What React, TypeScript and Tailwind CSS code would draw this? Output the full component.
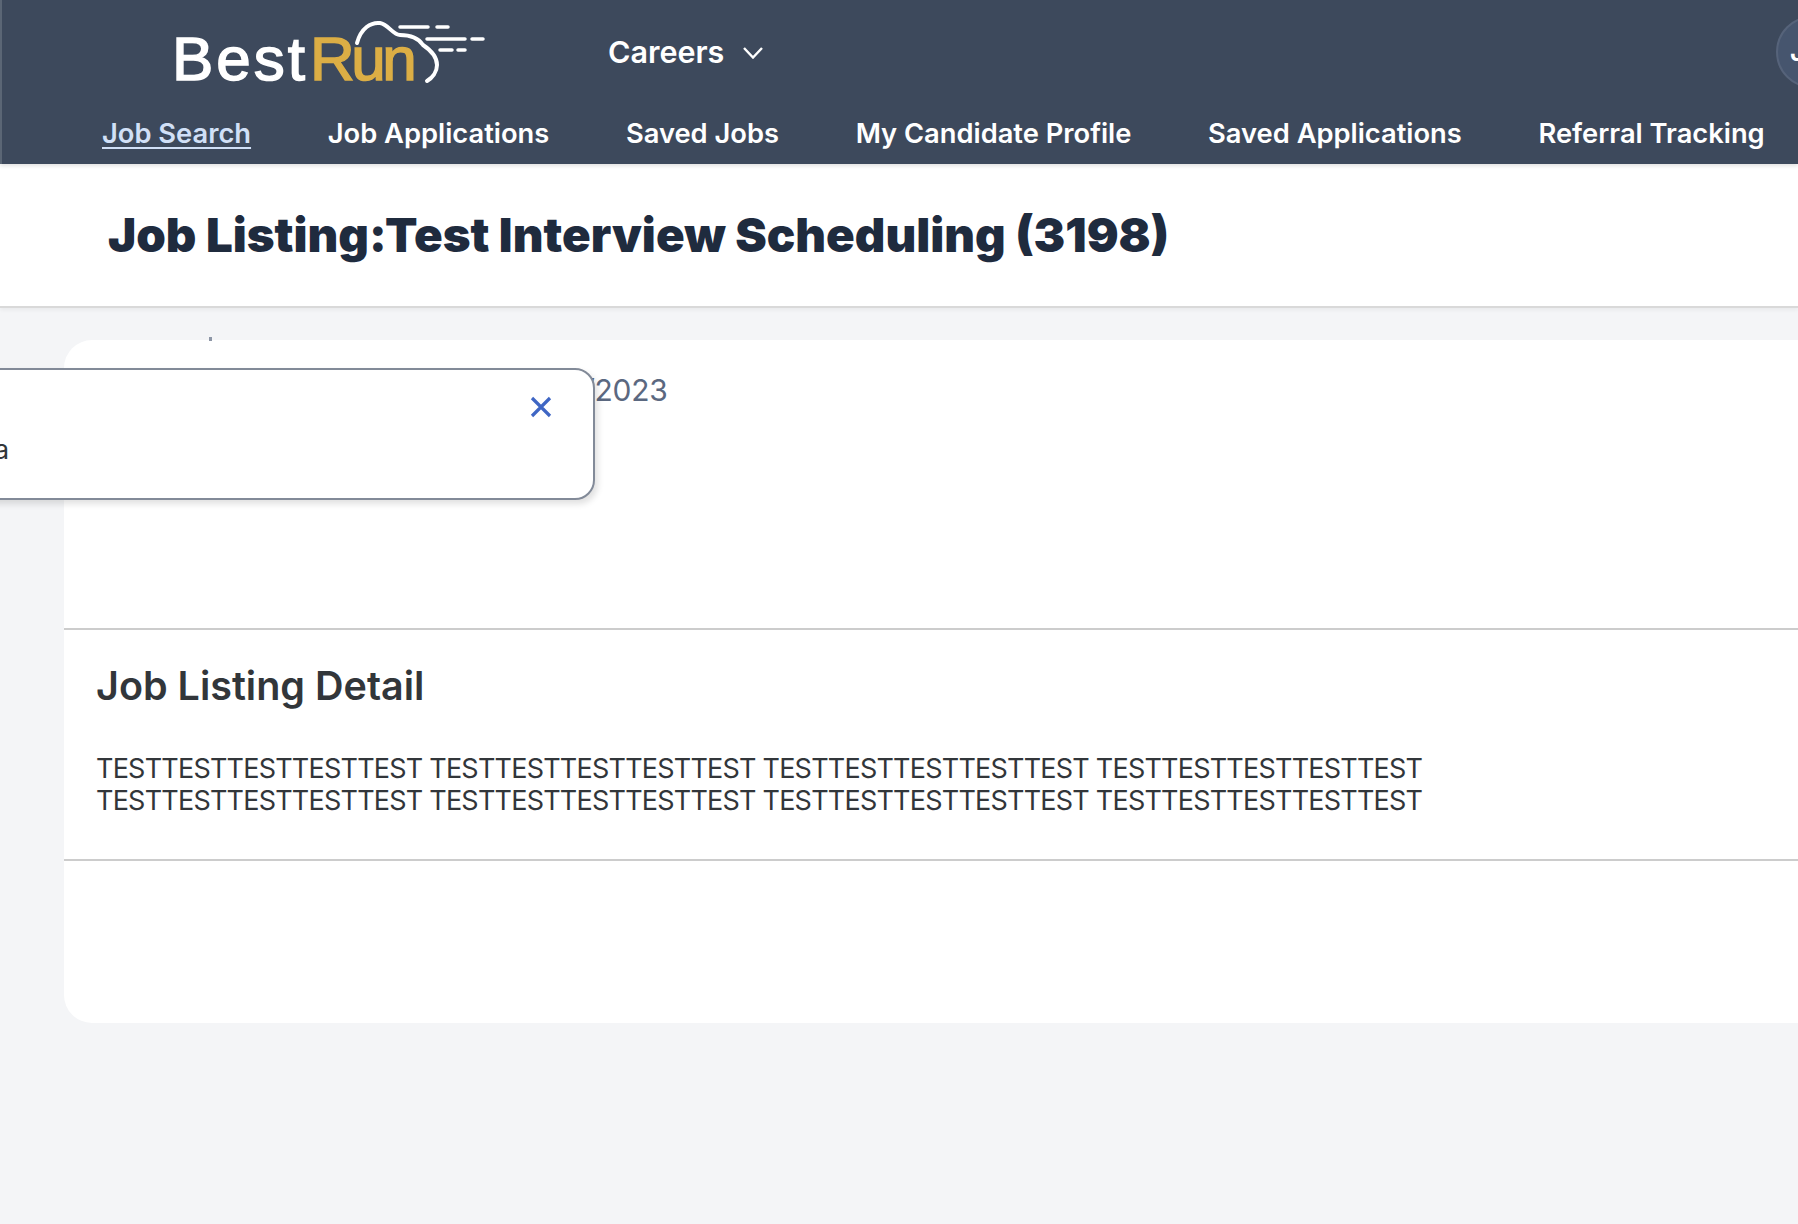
const NAV = ["Job Applications", "Saved Jobs", "My Candidate Profile", "Saved Applications", "Referral Tracking"];
const TEST = "TESTTESTTESTTESTTEST TESTTESTTESTTESTTEST TESTTESTTESTTESTTEST TESTTESTTESTTESTTEST";

function Logo() {
  return (
    <div className="relative h-[72px] w-[320px] shrink-0">
      <div className="absolute left-[-2px] top-[8px] flex text-[62px] leading-[70px] font-['Liberation_Sans',sans-serif] [-webkit-text-stroke:1.5px_currentColor]">
        <span className="tracking-[3px] text-white">Best</span>
        <span className="ml-[2px] tracking-[-3.5px] text-[#dcae45]">Run</span>
      </div>
      <svg className="absolute left-0 top-0" width="320" height="72" viewBox="0 0 320 72" fill="none" stroke="#fff" strokeLinecap="round">
        <path d="M183 27C187 12 197 6 206 7C214 8 219 19 226 19C237 19 245 23 249 29C258 35 263 42 263 49C263 56 258 62 253 65" strokeWidth="4" />
        <path d="M226 11H254M263 11H274M253 23H291M298 23H309M266 34H278M284 34H291" strokeWidth="3.5" />
      </svg>
    </div>
  );
}

export default function App() {
  return (
    <div className="relative h-[1224px] w-[1798px] overflow-hidden bg-[#f4f5f7] font-['Inter',sans-serif]">
      <header className="relative h-[164px] border-l-2 border-[#5b6675] bg-[#3d495c] shadow-[0_2px_4px_rgba(0,0,0,0.12)]">
        <div className="flex h-[104px] items-center pl-[172px]">
          <Logo />
          <div className="ml-[114px] flex items-center gap-[19px] text-[30.5px] font-semibold text-white">
            Careers
            <svg width="20" height="12" viewBox="0 0 20 12" fill="none" stroke="#fff" strokeWidth="2.4" className="mt-[2px]">
              <path d="M1 1L10 10.5L19 1" />
            </svg>
          </div>
        </div>
        <nav className="mt-[12px] flex gap-[76.7px] whitespace-nowrap pl-[100px] text-[27.3px] font-semibold leading-[36px] text-white">
          <a className="text-[#d1e0f7] underline underline-offset-4">Job Search</a>
          {NAV.map((n) => (
            <a key={n}>{n}</a>
          ))}
        </nav>
        <div className="absolute left-[1774px] top-[16px] flex h-[72px] w-[72px] items-center rounded-full border-2 border-[#56637a] bg-[#46556e] pl-[12px] text-[27px] font-semibold text-white">
          J
        </div>
      </header>

      <section className="flex h-[144px] items-center border-b-2 border-[#d9d9d9] bg-white pl-[108px] shadow-[0_2px_4px_rgba(0,0,0,0.05)]">
        <h1 className="whitespace-nowrap text-[47.4px] font-black text-[#1f2b3e]">
          Job Listing:Test Interview Scheduling (3198)
        </h1>
      </section>

      <main className="ml-[64px] mt-[32px] h-[683px] rounded-l-[28px] bg-white">
        <div className="flex h-[290px] justify-start border-b-2 border-[#cccccc] pl-[520px] pt-[30px]">
          <span className="text-[30px] leading-[40px] tracking-[-0.3px] text-[#5b6880]">/2023</span>
        </div>
        <div className="h-[231px] border-b-2 border-[#cccccc] px-[32px] pt-[30px]">
          <h2 className="text-[39.5px] font-semibold leading-[52px] text-[#32363a]">Job Listing Detail</h2>
          <p className="mt-[41px] w-[1400px] text-[27px] leading-[32px] tracking-[-0.78px] text-[#32363a]">{TEST} {TEST}</p>
        </div>
      </main>

      <div className="absolute left-[209px] top-[337px] h-[4px] w-[3px] bg-[#8d96a6]" />

      <div className="absolute left-[-40px] top-[368px] h-[132px] w-[635px] rounded-[20px] border-2 border-[#828a98] bg-white shadow-[3px_4px_6px_rgba(0,0,0,0.12)]">
        <span className="absolute left-[32px] top-[60px] text-[27px] leading-[40px] text-[#32363a]">a</span>
        <svg className="absolute right-[41px] top-[26px]" width="22" height="22" viewBox="0 0 22 22" fill="none" stroke="#3f66c4" strokeWidth="3.2">
          <path d="M2 2L20 20M20 2L2 20" />
        </svg>
      </div>
    </div>
  );
}
